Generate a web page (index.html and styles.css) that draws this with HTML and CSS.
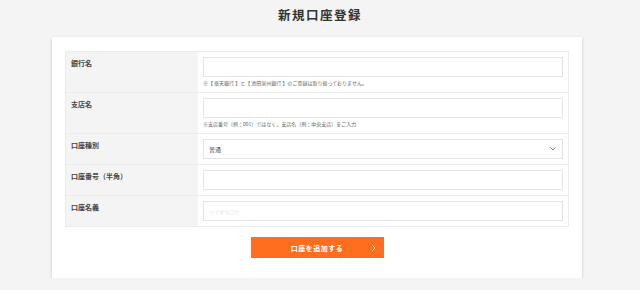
FILE: index.html
```html
<!DOCTYPE html>
<html lang="ja">
<head>
<meta charset="UTF-8" />
<meta name="viewport" content="width=device-width, initial-scale=1.0">
<title>新規口座登録</title>
<link rel="stylesheet" href="styles.css">
</head>
<body>
<div class="page-head">
    <h1 class="page-title">新規口座登録</h1>
</div>
<div class="card">
    <form class="bank-form">
        <table class="form-table">
            <tr>
                <th>銀行名</th>
                <td>
                    <input type="text" class="field">
                    <p class="note">※【 楽天銀行 】と【 池田泉州銀行 】のご登録は取り扱っておりません。</p>
                </td>
            </tr>
            <tr>
                <th>支店名</th>
                <td>
                    <input type="text" class="field">
                    <p class="note">※支店番号（例：001）ではなく、支店名（例：中央支店）をご入力</p>
                </td>
            </tr>
            <tr>
                <th>口座種別</th>
                <td>
                    <div class="select-wrap">
                        <select class="field">
                            <option>普通</option>
                            <option>当座</option>
                        </select>
                        <svg class="select-arrow" width="6" height="4" viewBox="0 0 6 4"><path d="M0.5 0.5 L3 3 L5.5 0.5" fill="none" stroke="#777" stroke-width="0.9"/></svg>
                    </div>
                </td>
            </tr>
            <tr>
                <th>口座番号（半角）</th>
                <td><input type="text" class="field"></td>
            </tr>
            <tr>
                <th>口座名義</th>
                <td><input type="text" class="field" placeholder="ヤマダタロウ"></td>
            </tr>
        </table>
        <div class="actions">
            <button type="button" class="btn">口座を追加する
                <svg class="btn-arrow" width="4" height="6" viewBox="0 0 4 6"><path d="M0.6 0.5 L3 3 L0.6 5.5" fill="none" stroke="#fff" stroke-width="0.9"/></svg>
            </button>
        </div>
    </form>
</div>
</body>
</html>
```

FILE: styles.css
```css
body {
    margin: 0;
    background: #f4f4f4;
    font-family: "Noto Sans CJK JP", "Noto Sans", sans-serif;
    color: #333;
}
.page-head {
    height: 37px;
    display: flex;
    justify-content: center;
}
.page-title {
    margin: 6px 0 0;
    font-size: 12.5px;
    line-height: 18px;
    font-weight: 700;
    letter-spacing: 1.5px;
    color: #333;
}
.card {
    width: 504px;
    margin-left: 52px;
    padding: 14px 13px 20px;
    background: #fff;
    box-shadow: 0 1px 3px rgba(0,0,0,0.18);
}
.form-table {
    width: 100%;
    border-collapse: collapse;
    border: 1px solid #ececec;
}
.form-table tr {
    border-top: 1px solid #ececec;
}
.form-table th {
    width: 122px;
    padding: 7px 5px 0;
    vertical-align: top;
    text-align: left;
    background: #f4f4f4;
    font-size: 7px;
    line-height: 9px;
    font-weight: 700;
    color: #444;
}
.form-table td {
    padding: 5px;
    vertical-align: top;
}
.field {
    display: block;
    box-sizing: border-box;
    width: 100%;
    height: 20px;
    margin: 0;
    padding: 0 5px;
    border: 1px solid #e2e4e8;
    background: #fff;
    font-family: inherit;
    font-size: 6px;
    color: #444;
    outline: none;
}
.field::placeholder {
    color: #e6e6e6;
    font-size: 5px;
}
.note {
    margin: 2px 0 0;
    font-size: 5px;
    line-height: 8px;
    color: #666;
}
.select-wrap {
    position: relative;
}
.select-wrap select {
    appearance: none;
    -webkit-appearance: none;
}
.select-arrow {
    position: absolute;
    right: 7px;
    top: 8px;
}
.actions {
    display: flex;
    justify-content: center;
    margin-top: 10px;
}
.btn {
    position: relative;
    width: 133px;
    height: 21px;
    padding: 0;
    border: none;
    background: #ff6d1f;
    color: #fff;
    font-family: inherit;
    font-size: 7px;
    font-weight: 700;
    letter-spacing: 0.5px;
    cursor: pointer;
}
.btn-arrow {
    position: absolute;
    right: 8px;
    top: 8px;
}
```
